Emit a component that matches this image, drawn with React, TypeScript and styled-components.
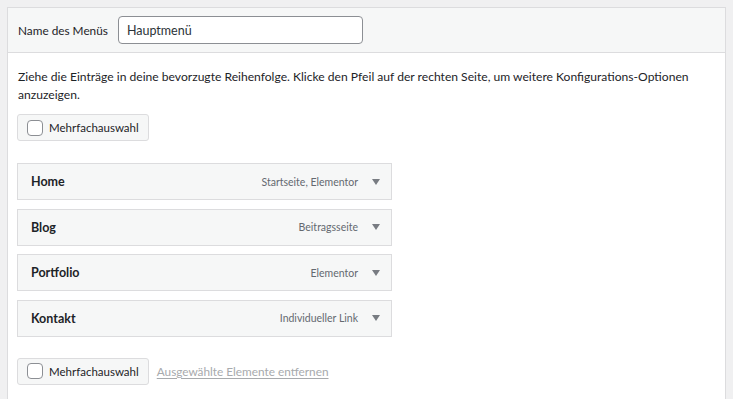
import React from 'react';
import styled, { createGlobalStyle } from 'styled-components';

const GlobalStyle = createGlobalStyle`
  body {
    margin: 0;
    background: #f0f0f1;
    font-family: Lato, "Noto Sans", sans-serif;
    font-size: 12px;
    color: #1d2327;
  }
`;

const Page = styled.div`
  padding: 7px 7px 0 7px;
  height: 392px;
  overflow: hidden;
`;

const Panel = styled.div`
  background: #fff;
  border: 1px solid #dcdcde;
  border-bottom: none;
  height: 100%;
`;

const Header = styled.div`
  display: flex;
  align-items: center;
  gap: 10px;
  height: 45px;
  box-sizing: border-box;
  padding: 0 10px;
  background: #f6f7f7;
  border-bottom: 1px solid #dcdcde;
`;

const Label = styled.label`
  font-size: 11.8px;
  color: #1d2327;
`;

const NameInput = styled.input`
  width: 245px;
  height: 28px;
  box-sizing: border-box;
  padding: 0 8px;
  border: 1px solid #8c8f94;
  border-radius: 4px;
  background: #fff;
  font-family: inherit;
  font-size: 12.5px;
  color: #2c3338;
  outline: none;
`;

const Body = styled.div`
  padding: 15px 9px 0 9px;
`;

const Hint = styled.p`
  margin: 0 0 0 1px;
  font-size: 12.1px;
  line-height: 18px;
  color: #1d2327;
`;

const BulkButton = styled.label<{ $top: number }>`
  display: inline-flex;
  align-items: center;
  gap: 6px;
  margin-top: ${({ $top }) => $top}px;
  height: 27px;
  box-sizing: border-box;
  padding: 0 9px 0 9px;
  background: #f6f7f7;
  border: 1px solid #dcdcde;
  border-radius: 3px;
  font-size: 11.5px;
  color: #1d2327;
`;

const Check = styled.span`
  width: 14px;
  height: 14px;
  border: 1px solid #8c8f94;
  border-radius: 4px;
  background: #fff;
`;

const ItemList = styled.ul`
  list-style: none;
  margin: 22px 0 0 0;
  padding: 0;
  display: flex;
  flex-direction: column;
  gap: 8.5px;
`;

const ItemBar = styled.li`
  display: flex;
  align-items: center;
  width: 375px;
  height: 37px;
  box-sizing: border-box;
  padding: 0 11px 0 13px;
  background: #f6f7f7;
  border: 1px solid #dcdcde;
`;

const ItemTitle = styled.span`
  flex: 1;
  font-weight: 700;
  font-size: 12.5px;
  color: #1d2327;
`;

const ItemType = styled.span`
  font-size: 10.5px;
  color: #646970;
`;

const Arrow = styled.span`
  margin-left: 14px;
  width: 0;
  height: 0;
  border-left: 4px solid transparent;
  border-right: 4px solid transparent;
  border-top: 6px solid #787c82;
`;

const Footer = styled.div`
  display: flex;
  align-items: center;
  gap: 8px;
  margin-top: 21px;
`;

const RemoveLink = styled.a`
  font-size: 11.8px;
  color: #a7aaad;
  text-decoration: underline;
  text-underline-offset: 2px;
`;

const items = [
  { title: 'Home', type: 'Startseite, Elementor' },
  { title: 'Blog', type: 'Beitragsseite' },
  { title: 'Portfolio', type: 'Elementor' },
  { title: 'Kontakt', type: 'Individueller Link' },
];

export default function App() {
  return (
    <>
      <GlobalStyle />
      <Page>
        <Panel>
          <Header>
            <Label>Name des Menüs</Label>
            <NameInput defaultValue="Hauptmenü" />
          </Header>
          <Body>
            <Hint>
              Ziehe die Einträge in deine bevorzugte Reihenfolge. Klicke den Pfeil auf der rechten Seite, um weitere
              Konfigurations-Optionen anzuzeigen.
            </Hint>
            <BulkButton $top={10}>
              <Check />
              Mehrfachauswahl
            </BulkButton>
            <ItemList>
              {items.map((it) => (
                <ItemBar key={it.title}>
                  <ItemTitle>{it.title}</ItemTitle>
                  <ItemType>{it.type}</ItemType>
                  <Arrow />
                </ItemBar>
              ))}
            </ItemList>
            <Footer>
              <BulkButton $top={0}>
                <Check />
                Mehrfachauswahl
              </BulkButton>
              <RemoveLink href="#">Ausgewählte Elemente entfernen</RemoveLink>
            </Footer>
          </Body>
        </Panel>
      </Page>
    </>
  );
}
